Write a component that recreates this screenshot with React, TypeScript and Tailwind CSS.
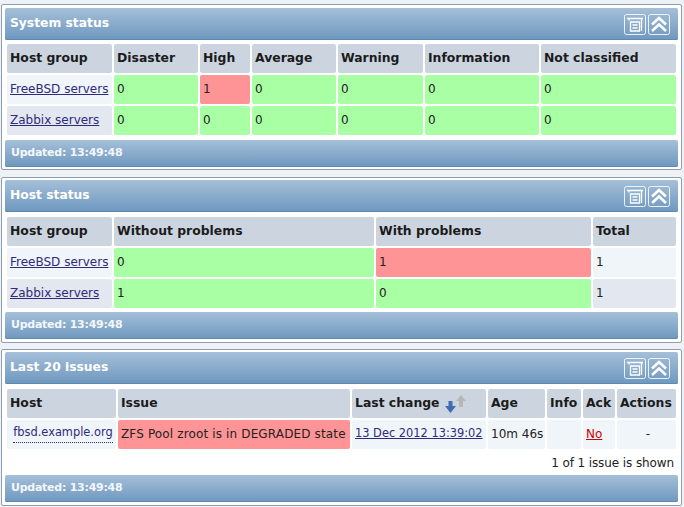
import { ReactNode } from 'react';

const font = "font-['DejaVu_Sans',sans-serif]";
const head = 'flex h-[29px] items-center rounded-[2px] bg-[#ccd5df] pb-[1px] pl-[3px] text-[12.4px] font-bold whitespace-nowrap text-[#1b1b1b]';
const cell = 'flex h-[29px] items-center rounded-[2px] pb-[2px] pl-[3px] text-[12px] whitespace-nowrap text-[#222]';
const green = 'bg-[#a9ffa3]';
const red = 'bg-[#ff9496]';
const light = 'bg-[#f0f5f9]';
const gray = 'bg-[#e3e7ef]';
const link = 'text-[#2f2a7d] underline';

function HeaderIcons() {
  return (
    <div className="flex gap-[2px]">
      <svg width="22" height="21" viewBox="0 0 22 21" fill="none" stroke="#fff">
        <rect x="0.5" y="0.5" width="21" height="20" rx="2" strokeOpacity="0.85" />
        <path d="M3 4.5h16M5 4.5v2M17.5 4.5v12.5M6.5 8h9v9h-9zM8.5 11h5M8.5 14h5" strokeWidth="1.3" />
      </svg>
      <svg width="22" height="21" viewBox="0 0 22 21" fill="none" stroke="#fff">
        <rect x="0.5" y="0.5" width="21" height="20" rx="2" strokeOpacity="0.85" />
        <path d="M4 10.5l7-6.5 7 6.5M4 17l7-6.5 7 6.5" strokeWidth="2.6" />
      </svg>
    </div>
  );
}

function SortArrows() {
  return (
    <svg width="22" height="20" viewBox="0 0 22 20" className="mt-[1px] ml-[5px]">
      <path d="M11 7l5-6 5 6h-3v6h-4V7z" fill="#b6b6b6" />
      <path d="M0 12h3.5V7h4v5H11l-5.5 7z" fill="#3f6db5" />
    </svg>
  );
}

function Panel({ title, children, className }: { title: string; children: ReactNode; className: string }) {
  return (
    <section className={`flex flex-col rounded-[2px] border border-[#8c9db4] bg-white px-[3px] ${className}`}>
      <div className="flex h-[32px] shrink-0 items-center justify-between rounded-[2px] bg-gradient-to-b from-[#a5bfd9] to-[#6e98bf] pl-[5px] pr-[8px] shadow-[inset_0_-1px_0_#5f88ae]">
        <span className="pb-[1px] text-[12.3px] font-bold text-white">{title}</span>
        <HeaderIcons />
      </div>
      {children}
      <div className="mt-auto mb-[2px] flex h-[27px] items-center rounded-[2px] bg-gradient-to-b from-[#a5bfd9] to-[#6e98bf] pl-[6px] shadow-[inset_0_-1px_0_#5f88ae]">
        <span className="pb-[1px] text-[11px] font-bold tracking-[-0.25px] text-[#f4f7fa]">Updated: 13:49:48</span>
      </div>
    </section>
  );
}

function SystemStatus() {
  const heads = ['Host group', 'Disaster', 'High', 'Average', 'Warning', 'Information', 'Not classified'];
  const rows = [
    { name: 'FreeBSD servers', bg: light, vals: [0, 1, 0, 0, 0, 0] },
    { name: 'Zabbix servers', bg: gray, vals: [0, 0, 0, 0, 0, 0] },
  ];
  return (
    <div className="mt-[4px] ml-[2px] mr-[2px] grid grid-cols-[105px_84px_50px_84px_85px_114px_135px] gap-[2px]">
      {heads.map((h) => (
        <div key={h} className={head}>{h}</div>
      ))}
      {rows.map((r) => (
        <div key={r.name} className="contents">
          <div className={`${cell} ${r.bg}`}><a className={link}>{r.name}</a></div>
          {r.vals.map((v, i) => (
            <div key={i} className={`${cell} ${v ? red : green}`}>{v}</div>
          ))}
        </div>
      ))}
    </div>
  );
}

function HostStatus() {
  return (
    <div className="mt-[5px] ml-[2px] mr-[1px] grid grid-cols-[105px_260px_215px_83px] gap-[2px]">
      {['Host group', 'Without problems', 'With problems', 'Total'].map((h) => (
        <div key={h} className={head}>{h}</div>
      ))}
      <div className={`${cell} ${light}`}><a className={link}>FreeBSD servers</a></div>
      <div className={`${cell} ${green}`}>0</div>
      <div className={`${cell} ${red}`}>1</div>
      <div className={`${cell} ${light}`}>1</div>
      <div className={`${cell} ${gray}`}><a className={link}>Zabbix servers</a></div>
      <div className={`${cell} ${green}`}>1</div>
      <div className={`${cell} ${green}`}>0</div>
      <div className={`${cell} ${gray}`}>1</div>
    </div>
  );
}

function Issues() {
  return (
    <>
      <div className="mt-[5px] ml-[2px] mr-[1px] grid grid-cols-[109px_232px_134px_57px_34px_32px_59px] gap-[2px]">
        <div className={head}>Host</div>
        <div className={head}>Issue</div>
        <div className={head}>Last change<SortArrows /></div>
        <div className={head}>Age</div>
        <div className={head}>Info</div>
        <div className={head}>Ack</div>
        <div className={head}>Actions</div>
        <div className={`${cell} ${light} justify-center pl-0`}>
          <a className="border-b border-dotted border-[#2f2a7d] text-[11.4px] text-[#2f2a7d]">fbsd.example.org</a>
        </div>
        <div className={`${cell} ${red} tracking-[0.14px]`}>ZFS Pool zroot is in DEGRADED state</div>
        <div className={`${cell} ${light}`}><a className={`${link} text-[11.4px]`}>13 Dec 2012 13:39:02</a></div>
        <div className={`${cell} ${light} text-[11.4px]`}>10m 46s</div>
        <div className={`${cell} ${light}`} />
        <div className={`${cell} ${light}`}><a className="text-[#cc0000] underline">No</a></div>
        <div className={`${cell} ${light} justify-center pl-0`}>-</div>
      </div>
      <div className="mt-[4px] mr-[4px] text-right text-[12px] leading-[20px] tracking-[-0.1px] text-[#222]">1 of 1 issue is shown</div>
    </>
  );
}

export default function App() {
  return (
    <div className={`${font} flex h-[507px] w-[684px] flex-col bg-[#eef1f5] pl-[1px] pr-[2px]`}>
      <Panel title="System status" className="mt-[4px] h-[166px] pt-[3px]"><SystemStatus /></Panel>
      <Panel title="Host status" className="mt-[7px] h-[166px] pt-[2px] pb-[1px]"><HostStatus /></Panel>
      <Panel title="Last 20 issues" className="mt-[6px] h-[157px] pt-[2px] pb-[1px]"><Issues /></Panel>
    </div>
  );
}
